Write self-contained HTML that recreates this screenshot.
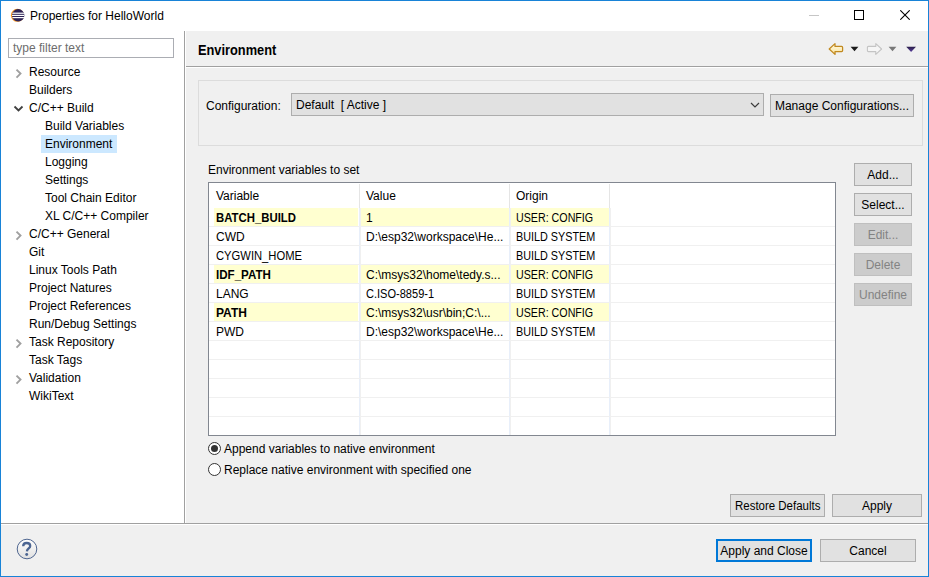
<!DOCTYPE html>
<html><head><meta charset="utf-8">
<style>
*{margin:0;padding:0;box-sizing:border-box}
html,body{width:929px;height:577px;overflow:hidden;background:#f0f0f0;font-family:"Liberation Sans",sans-serif;font-size:12px;color:#000}
.a{position:absolute}
.t{position:absolute;white-space:nowrap;line-height:14px;height:14px}
.b{position:absolute;background:#e1e1e1;border:1px solid #adadad;text-align:center;line-height:21px;padding-top:1px;white-space:nowrap}
.d{background:#cccccc;border-color:#bfbfbf;color:#838383}
.bold{font-weight:bold}
</style></head><body>
<!-- window frame -->
<div class="a" style="left:0;top:0;width:929px;height:577px;border:1px solid #1883d7"></div>
<!-- title bar -->
<div class="a" style="left:1px;top:1px;width:927px;height:30px;background:#fff"></div>
<svg class="a" style="left:9px;top:8px" width="17" height="16" viewBox="0 0 17 16">
  <defs><clipPath id="ec"><circle cx="9.2" cy="7.3" r="6.2"/></clipPath></defs>
  <circle cx="8.4" cy="7.3" r="6.5" fill="#f7941e"/>
  <circle cx="9.2" cy="7.3" r="6.2" fill="#2c2255"/>
  <g clip-path="url(#ec)" fill="#fff">
  <rect x="2" y="4.6" width="14" height="1.2"/>
  <rect x="2" y="6.8" width="14" height="1.2"/>
  <rect x="2" y="9.0" width="14" height="1.2"/>
  </g>
</svg>
<div class="t" style="left:30px;top:9px">Properties for HelloWorld</div>
<div class="a" style="left:809px;top:15px;width:10px;height:1px;background:#c6c6c6"></div>
<div class="a" style="left:854px;top:10px;width:10px;height:10px;border:1px solid #000"></div>
<svg class="a" style="left:900px;top:10px" width="10" height="10" viewBox="0 0 10 10">
  <path d="M0.3 0.3 L9.7 9.7 M9.7 0.3 L0.3 9.7" stroke="#000" stroke-width="1.1" fill="none"/>
</svg>

<!-- left panel -->
<div class="a" style="left:1px;top:31px;width:183px;height:492px;background:#fff"></div>
<div class="a" style="left:184px;top:31px;width:1px;height:492px;background:#a0a0a0"></div>
<div class="a" style="left:185px;top:31px;width:1px;height:492px;background:#fff"></div>
<div class="a" style="left:8px;top:38px;width:166px;height:20px;border:1px solid #abadb3;background:#fff"></div>
<div class="t" style="left:13px;top:41px;color:#6d6d6d">type filter text</div>

<svg class="a" style="left:15px;top:68px" width="8" height="11" viewBox="0 0 8 11"><path d="M1.5 1.6 L5.5 5.6 L1.5 9.6" stroke="#a0a0a0" stroke-width="1.9" fill="none"/></svg>
<div class="t" style="left:29px;top:65px">Resource</div>
<div class="t" style="left:29px;top:83px">Builders</div>
<svg class="a" style="left:13px;top:105px" width="11" height="8" viewBox="0 0 11 8"><path d="M1.5 1.5 L5.5 5.5 L9.5 1.5" stroke="#404040" stroke-width="1.8" fill="none"/></svg>
<div class="t" style="left:29px;top:101px">C/C++ Build</div>
<div class="t" style="left:45px;top:119px">Build Variables</div>
<div class="a" style="left:41px;top:135px;width:76px;height:18px;background:#cce8ff"></div>
<div class="t" style="left:45px;top:137px">Environment</div>
<div class="t" style="left:45px;top:155px">Logging</div>
<div class="t" style="left:45px;top:173px">Settings</div>
<div class="t" style="left:45px;top:191px">Tool Chain Editor</div>
<div class="t" style="left:45px;top:209px">XL C/C++ Compiler</div>
<svg class="a" style="left:15px;top:230px" width="8" height="11" viewBox="0 0 8 11"><path d="M1.5 1.6 L5.5 5.6 L1.5 9.6" stroke="#a0a0a0" stroke-width="1.9" fill="none"/></svg>
<div class="t" style="left:29px;top:227px">C/C++ General</div>
<div class="t" style="left:29px;top:245px">Git</div>
<div class="t" style="left:29px;top:263px">Linux Tools Path</div>
<div class="t" style="left:29px;top:281px">Project Natures</div>
<div class="t" style="left:29px;top:299px">Project References</div>
<div class="t" style="left:29px;top:317px">Run/Debug Settings</div>
<svg class="a" style="left:15px;top:338px" width="8" height="11" viewBox="0 0 8 11"><path d="M1.5 1.6 L5.5 5.6 L1.5 9.6" stroke="#a0a0a0" stroke-width="1.9" fill="none"/></svg>
<div class="t" style="left:29px;top:335px">Task Repository</div>
<div class="t" style="left:29px;top:353px">Task Tags</div>
<svg class="a" style="left:15px;top:374px" width="8" height="11" viewBox="0 0 8 11"><path d="M1.5 1.6 L5.5 5.6 L1.5 9.6" stroke="#a0a0a0" stroke-width="1.9" fill="none"/></svg>
<div class="t" style="left:29px;top:371px">Validation</div>
<div class="t" style="left:29px;top:389px">WikiText</div>

<!-- bottom separator -->
<div class="a" style="left:1px;top:523px;width:927px;height:1px;background:#a0a0a0"></div>
<div class="a" style="left:1px;top:524px;width:927px;height:1px;background:#fff"></div>

<!-- header -->
<div class="t bold" style="left:198px;top:43px;font-size:14px;transform:scaleX(0.915);transform-origin:0 0">Environment</div>
<div class="a" style="left:186px;top:66px;width:742px;height:1px;background:#a0a0a0"></div>
<div class="a" style="left:186px;top:67px;width:742px;height:1px;background:#fff"></div>

<!-- nav icons -->
<svg class="a" style="left:826px;top:41px" width="94" height="16" viewBox="0 0 94 16">
  <defs><linearGradient id="yg" x1="0" y1="0" x2="0" y2="1"><stop offset="0" stop-color="#fffbe6"/><stop offset="1" stop-color="#fbe39a"/></linearGradient>
  <linearGradient id="pg" x1="0" y1="0" x2="0" y2="1"><stop offset="0" stop-color="#2a1e48"/><stop offset="1" stop-color="#5a3fa0"/></linearGradient></defs>
  <path d="M3.2 8 L9 2.6 V5.4 H15.6 Q16.6 5.4 16.6 6.4 V9.6 Q16.6 10.6 15.6 10.6 H9 V13.4 Z" fill="url(#yg)" stroke="#c1891f" stroke-width="1.25" stroke-linejoin="round"/>
  <path d="M24.6 5.8 H32.4 L28.5 10.2 Z" fill="#1a1a1a"/>
  <path d="M55.6 8 L49.8 2.6 V5.4 H42.4 Q41.4 5.4 41.4 6.4 V9.6 Q41.4 10.6 42.4 10.6 H49.8 V13.4 Z" fill="#f6f6f6" stroke="#c4c4c4" stroke-width="1.1" stroke-linejoin="round"/>
  <path d="M62.6 5.8 H70.4 L66.5 10.2 Z" fill="#787878"/>
  <path d="M80.2 5.8 H90 L85.1 11 Z" fill="url(#pg)"/>
</svg>

<!-- configuration group -->
<div class="a" style="left:198px;top:80px;width:725px;height:66px;border:1px solid #dcdcdc"></div>
<div class="t" style="left:206px;top:99px">Configuration:</div>
<div class="a" style="left:291px;top:93px;width:473px;height:23px;background:#e1e1e1;border:1px solid #adadad"></div>
<div class="t" style="left:296px;top:98px">Default&nbsp; [ Active ]</div>
<svg class="a" style="left:750px;top:102px" width="10" height="7" viewBox="0 0 10 7">
  <path d="M1 1 L5 5 L9 1" stroke="#3c3c3c" stroke-width="1.2" fill="none"/>
</svg>
<div class="b" style="left:770px;top:94px;width:144px;height:23px">Manage Configurations...</div>

<!-- env vars -->
<div class="t" style="left:208px;top:163px">Environment variables to set</div>
<div class="a" style="left:208px;top:182px;width:628px;height:254px;border:1px solid #828790;background:#fff"></div>
<div class="t" style="left:216px;top:189px">Variable</div>
<div class="t" style="left:366px;top:189px">Value</div>
<div class="t" style="left:516px;top:189px">Origin</div>
<div class="a" style="left:359px;top:184px;width:1px;height:24px;background:#e5e5e5"></div>
<div class="a" style="left:359px;top:208px;width:1px;height:227px;background:#e8effa"></div>
<div class="a" style="left:360px;top:208px;width:1px;height:227px;background:#f0f0f0"></div>
<div class="a" style="left:509px;top:184px;width:1px;height:24px;background:#e5e5e5"></div>
<div class="a" style="left:509px;top:208px;width:1px;height:227px;background:#e8effa"></div>
<div class="a" style="left:510px;top:208px;width:1px;height:227px;background:#f0f0f0"></div>
<div class="a" style="left:609px;top:184px;width:1px;height:24px;background:#e5e5e5"></div>
<div class="a" style="left:609px;top:208px;width:1px;height:227px;background:#e8effa"></div>
<div class="a" style="left:610px;top:208px;width:1px;height:227px;background:#f0f0f0"></div>
<div class="a" style="left:209px;top:226px;width:626px;height:1px;background:#f0f0f0"></div>
<div class="a" style="left:209px;top:245px;width:626px;height:1px;background:#f0f0f0"></div>
<div class="a" style="left:209px;top:264px;width:626px;height:1px;background:#f0f0f0"></div>
<div class="a" style="left:209px;top:283px;width:626px;height:1px;background:#f0f0f0"></div>
<div class="a" style="left:209px;top:302px;width:626px;height:1px;background:#f0f0f0"></div>
<div class="a" style="left:209px;top:321px;width:626px;height:1px;background:#f0f0f0"></div>
<div class="a" style="left:209px;top:340px;width:626px;height:1px;background:#f0f0f0"></div>
<div class="a" style="left:209px;top:359px;width:626px;height:1px;background:#f0f0f0"></div>
<div class="a" style="left:209px;top:378px;width:626px;height:1px;background:#f0f0f0"></div>
<div class="a" style="left:209px;top:397px;width:626px;height:1px;background:#f0f0f0"></div>
<div class="a" style="left:209px;top:416px;width:626px;height:1px;background:#f0f0f0"></div>
<div class="a" style="left:214px;top:208px;width:144px;height:18px;background:#ffffd0"></div>
<div class="a" style="left:361px;top:208px;width:148px;height:18px;background:#ffffd0"></div>
<div class="a" style="left:511px;top:208px;width:98px;height:18px;background:#ffffd0"></div>
<div class="t bold" style="left:216px;top:211px;transform:scaleX(0.947);transform-origin:0 0">BATCH_BUILD</div>
<div class="t" style="left:366px;top:211px">1</div>
<div class="t" style="left:516px;top:211px;transform:scaleX(0.89);transform-origin:0 0">USER: CONFIG</div>
<div class="t" style="left:216px;top:230px">CWD</div>
<div class="t" style="left:366px;top:230px">D:\esp32\workspace\He...</div>
<div class="t" style="left:516px;top:230px;transform:scaleX(0.9);transform-origin:0 0">BUILD SYSTEM</div>
<div class="t" style="left:216px;top:249px;transform:scaleX(0.935);transform-origin:0 0">CYGWIN_HOME</div>
<div class="t" style="left:516px;top:249px;transform:scaleX(0.9);transform-origin:0 0">BUILD SYSTEM</div>
<div class="a" style="left:214px;top:265px;width:144px;height:18px;background:#ffffd0"></div>
<div class="a" style="left:361px;top:265px;width:148px;height:18px;background:#ffffd0"></div>
<div class="a" style="left:511px;top:265px;width:98px;height:18px;background:#ffffd0"></div>
<div class="t bold" style="left:216px;top:268px;transform:scaleX(0.965);transform-origin:0 0">IDF_PATH</div>
<div class="t" style="left:366px;top:268px">C:\msys32\home\tedy.s...</div>
<div class="t" style="left:516px;top:268px;transform:scaleX(0.89);transform-origin:0 0">USER: CONFIG</div>
<div class="t" style="left:216px;top:287px">LANG</div>
<div class="t" style="left:366px;top:287px;transform:scaleX(0.92);transform-origin:0 0">C.ISO-8859-1</div>
<div class="t" style="left:516px;top:287px;transform:scaleX(0.9);transform-origin:0 0">BUILD SYSTEM</div>
<div class="a" style="left:214px;top:303px;width:144px;height:18px;background:#ffffd0"></div>
<div class="a" style="left:361px;top:303px;width:148px;height:18px;background:#ffffd0"></div>
<div class="a" style="left:511px;top:303px;width:98px;height:18px;background:#ffffd0"></div>
<div class="t bold" style="left:216px;top:306px">PATH</div>
<div class="t" style="left:366px;top:306px">C:\msys32\usr\bin;C:\...</div>
<div class="t" style="left:516px;top:306px;transform:scaleX(0.89);transform-origin:0 0">USER: CONFIG</div>
<div class="t" style="left:216px;top:325px">PWD</div>
<div class="t" style="left:366px;top:325px">D:\esp32\workspace\He...</div>
<div class="t" style="left:516px;top:325px;transform:scaleX(0.9);transform-origin:0 0">BUILD SYSTEM</div>

<div class="b" style="left:854px;top:163px;width:58px;height:23px">Add...</div>
<div class="b" style="left:854px;top:193px;width:58px;height:23px">Select...</div>
<div class="b d" style="left:854px;top:223px;width:58px;height:23px">Edit...</div>
<div class="b d" style="left:854px;top:253px;width:58px;height:23px">Delete</div>
<div class="b d" style="left:854px;top:283px;width:58px;height:23px">Undefine</div>

<!-- radios -->
<svg class="a" style="left:208px;top:442px" width="13" height="13" viewBox="0 0 13 13">
  <circle cx="6.5" cy="6.5" r="6" fill="#fff" stroke="#333" stroke-width="1"/>
  <circle cx="6.5" cy="6.5" r="3.5" fill="#333"/>
</svg>
<div class="t" style="left:224px;top:442px">Append variables to native environment</div>
<svg class="a" style="left:208px;top:463px" width="13" height="13" viewBox="0 0 13 13">
  <circle cx="6.5" cy="6.5" r="6" fill="#fff" stroke="#333" stroke-width="1"/>
</svg>
<div class="t" style="left:224px;top:463px">Replace native environment with specified one</div>

<div class="b" style="left:730px;top:494px;width:95px;height:23px"><span style="display:inline-block;transform:scaleX(0.955)">Restore Defaults</span></div>
<div class="b" style="left:832px;top:494px;width:90px;height:23px">Apply</div>

<!-- bottom -->
<svg class="a" style="left:16px;top:538px" width="22" height="22" viewBox="0 0 22 22">
  <defs><linearGradient id="hg" x1="0" y1="0" x2="0" y2="1"><stop offset="0" stop-color="#ffffff"/><stop offset="1" stop-color="#e0e0e0"/></linearGradient></defs>
  <circle cx="11" cy="11" r="9.8" fill="url(#hg)" stroke="#4f6690" stroke-width="1"/>
  <path d="M7.2 8.3 C7.2 5.9 8.8 5 10.7 5 C12.7 5 14.2 6.1 14.2 8 C14.2 10.3 11.1 10.6 10.9 13.3" stroke="#4b6592" stroke-width="2.3" fill="none"/>
  <circle cx="10.7" cy="16.5" r="1.45" fill="#4b6592"/>
</svg>
<div class="b" style="left:716px;top:539px;width:96px;height:23px;border:2px solid #0078d7;line-height:19px;padding-top:1px">Apply and Close</div>
<div class="b" style="left:820px;top:539px;width:96px;height:23px">Cancel</div>

</body></html>
